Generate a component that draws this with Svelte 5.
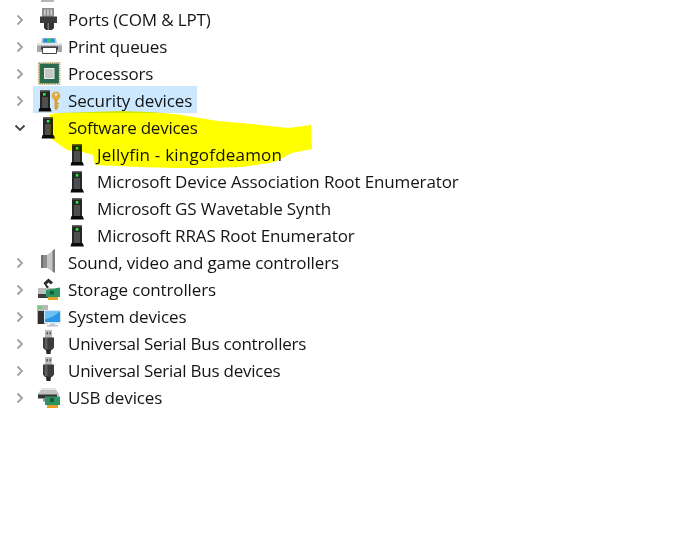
<script>
  const top = [
    { label: 'Ports (COM & LPT)', icon: 'ports' },
    { label: 'Print queues', icon: 'print' },
    { label: 'Processors', icon: 'cpu' },
    { label: 'Security devices', icon: 'security', hover: true },
  ];
  const children = [
    'Jellyfin - kingofdeamon',
    'Microsoft Device Association Root Enumerator',
    'Microsoft GS Wavetable Synth',
    'Microsoft RRAS Root Enumerator',
  ];
  const bottom = [
    { label: 'Sound, video and game controllers', icon: 'sound' },
    { label: 'Storage controllers', icon: 'storage' },
    { label: 'System devices', icon: 'system' },
    { label: 'Universal Serial Bus controllers', icon: 'usb' },
    { label: 'Universal Serial Bus devices', icon: 'usb' },
    { label: 'USB devices', icon: 'usbdev' },
  ];
</script>

{#snippet tower()}
  <path d="M8 4h10v18.500H8z" fill="#262626"/>
  <path d="M8 4h10v1.500H8z" fill="#666"/>
  <path d="M10 11h6v11.500h-6z" fill="#4e4e4e"/>
  <path d="M7.500 22h11l1.500 3.500H6.500z" fill="#0a0a0a"/>
  <rect x="11.800" y="7" width="2.600" height="2.600" fill="#2fe84a"/>
{/snippet}

{#snippet icon(name)}
  <svg class="icon" width="27" height="27" viewBox="0 0 27 27" aria-hidden="true">
    {#if name === 'ports'}
      <path d="M7 3h12v9H7z" fill="#8f8f8f"/>
      <path d="M9 4.500h1.500v6H9zM12.200 4.500h1.500v6h-1.500zM15.500 4.500H17v6h-1.500z" fill="#cfcfcf"/>
      <path d="M5 11.500h17v6.500H5z" fill="#3c3c3c"/>
      <path d="M9 18h10v5l-2 2h-6l-2-2z" fill="#333"/>
      <path d="M12.500 18H14v7h-1.500z" fill="#777"/>
    {:else if name === 'print'}
      <path d="M7 6h14l1 5H6z" fill="#c3c8cc"/>
      <path d="M8.500 6.500h11l.6 4H8z" fill="#1e90e0"/>
      <path d="M12 6.500h4v4h-4z" fill="#35c06e"/>
      <path d="M2 11h25v9H2z" fill="#a4a8ab"/>
      <path d="M2 11h25v2.400H2z" fill="#e2e5e7"/>
      <path d="M6 14.500h17v3H6z" fill="#333"/>
      <path d="M7.500 15.500h14v6h-14z" fill="#fff" stroke="#444" stroke-width="1"/>
    {:else if name === 'cpu'}
      <rect x="3.700" y="3.700" width="21" height="21.600" fill="none" stroke="#c9a45e" stroke-width="1.400" stroke-dasharray="1.300 .9"/>
      <rect x="4.500" y="4.500" width="19.400" height="20" fill="#2b6a4a"/>
      <rect x="9.500" y="9.500" width="9.500" height="10" fill="#c3c8c5" stroke="#e8ebe8" stroke-width="1"/>
    {:else if name === 'security'}
      <path d="M5 4h10v18.500H5z" fill="#262626"/>
      <path d="M5 4h10v1.500H5z" fill="#666"/>
      <path d="M7 11h6v11.500H7z" fill="#4e4e4e"/>
      <path d="M4.500 22h11l1 3.500H3.500z" fill="#0a0a0a"/>
      <rect x="8" y="7" width="2.600" height="2.600" fill="#2fe84a"/>
      <circle cx="21" cy="9.800" r="4.400" fill="#e2aa40"/>
      <circle cx="21" cy="8.600" r="1.300" fill="#cfe6fb"/>
      <path d="M19.500 13h3v9.500l-1.500 2-1.500-2z" fill="#d79c32"/>
      <path d="M22 17h2v1.500h-2zM22 20h1.600v1.500H22z" fill="#d79c32"/>
    {:else if name === 'tower'}
      {@render tower()}
    {:else if name === 'sound'}
      <path d="M6 7h6v13H6z" fill="#8d8d8d"/>
      <path d="M12 7l8-6v24l-8-5z" fill="#c6c6c6"/>
      <path d="M17.500 2.800l2.500-1.800v24l-2.500-1.600z" fill="#7d7d7d"/>
      <path d="M6 7h2v13H6z" fill="#6e6e6e"/>
    {:else if name === 'storage'}
      <path d="M8.500 8l5-4.500 4.500 4-2.200 2-2.300-2-2 2 2.500 2.400L12 13.500z" fill="#2c2c2c"/>
      <path d="M3 13h15l3 5v5H3z" fill="#bdbdbd"/>
      <path d="M3 19h10v4H3z" fill="#3e3e3e"/>
      <path d="M11 15l14-2.500V22H11z" fill="#2c9460"/>
      <path d="M15 16h4v3.500h-4z" fill="#1a5c39"/>
      <path d="M13 22h10v3H13z" fill="#e6a028"/>
    {:else if name === 'system'}
      <path d="M2 3h11v19H2z" fill="#b8b8b8"/>
      <path d="M3.500 4.500h3v2h-3z" fill="#2fe84a"/>
      <path d="M3 9h7v13H3z" fill="#303030"/>
      <path d="M9 8h17v13.500H9z" fill="#d6e6f2"/>
      <path d="M10 9.500h15V20H10z" fill="#2b96e6"/>
      <path d="M10 9.500h15l-7 5-8 3z" fill="#6cc0f3"/>
      <path d="M15 21.500h5V23h3v1.500H12V23h3z" fill="#b9c4cc"/>
    {:else if name === 'usb'}
      <path d="M10 1h7v8h-7z" fill="#bcbcbc"/>
      <path d="M11.500 3H13v2.500h-1.500zM14.500 3H16v2.500h-1.500z" fill="#5e5e5e"/>
      <path d="M8 8.500h11v10L17 21h-7l-2-2.500z" fill="#3c3c3c"/>
      <path d="M10 9h2.500v11H10z" fill="#5f5f5f"/>
      <path d="M11 21h5l-.5 4h-4z" fill="#262626"/>
    {:else if name === 'usbdev'}
      <path d="M7 5h13l4 6v2H3v-2z" fill="#c2c2c2"/>
      <path d="M7 5h13l1 2H6z" fill="#e4e4e4"/>
      <path d="M3 11.500h19v4H3z" fill="#363636"/>
      <path d="M8 15.500h3v3H8z" fill="#8f8f8f"/>
      <path d="M10 13.500h15V22H10z" fill="#2c9460"/>
      <path d="M15 15h4v4h-4z" fill="#1a5c39"/>
      <path d="M12 22h11v3H12z" fill="#e6a028"/>
    {/if}
  </svg>
{/snippet}

{#snippet chevron(open)}
  <svg class="chev" width="12" height="12" viewBox="0 0 12 12" aria-hidden="true">
    {#if open}
      <path d="M1.500 3.500L6 8l4.500-4.500" fill="none" stroke="#444" stroke-width="1.800"/>
    {:else}
      <path d="M3.500 1.500L8 6l-4.500 4.500" fill="none" stroke="#a0a0a0" stroke-width="1.800"/>
    {/if}
  </svg>
{/snippet}

{#snippet node(item)}
  <li class="row">
    <span class="twisty">{@render chevron(false)}</span>
    <span class="entry" class:hover={item.hover}>
      {@render icon(item.icon)}
      <span class="label" class:tight={item.icon === 'usb'}>{item.label}</span>
    </span>
  </li>
{/snippet}

<main class="tree">
  <div class="sliver"></div>
  <ul>
    {#each top as item}{@render node(item)}{/each}
    <li class="row">
      <span class="twisty">{@render chevron(true)}</span>
      <span class="entry">
        {@render icon('tower')}
        <span class="label tight">Software devices</span>
      </span>
    </li>
    {#each children as child, i}
      <li class="row child">
        <span class="entry">
          {@render icon('tower')}
          <span class="label" class:loose={i === 0}>{child}</span>
        </span>
      </li>
    {/each}
    {#each bottom as item}{@render node(item)}{/each}
  </ul>

  <svg class="marker" width="676" height="535" viewBox="0 0 676 535" aria-hidden="true">
    <path fill="#ffff00" d="M50 114 L60 113 L90 112 L120 111 L150 112 L175 114 L218 121 L252 124 L288 128 L311 125 L312 149 L292 153 L275 162 L242 167 L208 168 L175 168 L140 167 L95 165 L93 155 L83 152 L67 150 L50 138 Z"/>
  </svg>
</main>

<style>
  :global(body) {
    margin: 0;
    background: #fff;
  }
  .tree {
    position: relative;
    width: 676px;
    height: 535px;
    overflow: hidden;
    font-family: "Open Sans", "Noto Sans", sans-serif;
    font-size: 17px;
    letter-spacing: -0.13px;
    color: #141414;
  }
  .sliver {
    width: 13px;
    height: 2px;
    margin-left: 41px;
    background: #b5b5b5;
  }
  ul {
    list-style: none;
    margin: 0;
    padding: 3px 0 0;
  }
  .row {
    display: flex;
    align-items: center;
    height: 27px;
    white-space: nowrap;
  }
  .row.child {
    padding-left: 62px;
  }
  .twisty {
    display: flex;
    justify-content: center;
    align-items: center;
    width: 33px;
    margin-left: 3px;
    margin-right: -3px;
    padding-top: 3px;
    box-sizing: border-box;
  }
  .entry {
    display: flex;
    align-items: center;
    height: 27px;
    padding-left: 2px;
    padding-right: 5px;
  }
  .entry.hover {
    background: #cce8ff;
  }
  .icon {
    flex: none;
    filter: blur(0.4px);
  }
  .chev {
    display: block;
    filter: blur(0.3px);
  }
  .label {
    margin-left: 6px;
    padding-top: 1px;
    filter: blur(0.25px);
  }
  .label.tight {
    letter-spacing: -0.24px;
  }
  .label.loose {
    letter-spacing: 0.2px;
  }
  .marker {
    position: absolute;
    left: 0;
    top: 0;
    mix-blend-mode: multiply;
    pointer-events: none;
  }
</style>
